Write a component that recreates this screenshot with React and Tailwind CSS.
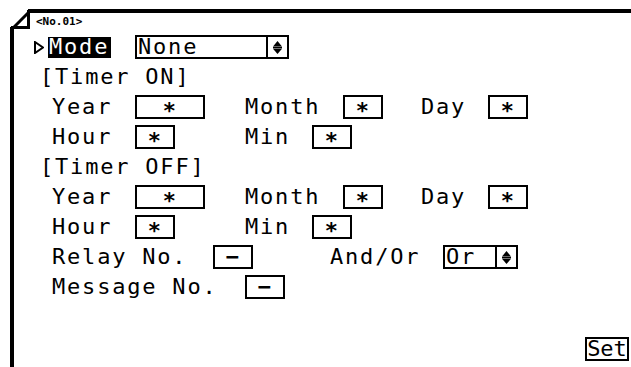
import React from "react";

function Box({ w, children }) {
    return (
        <div className={`h-[24px] border-2 border-black flex items-center justify-center ${w}`}>
            <span className="text-[22px] leading-none font-bold">{children}</span>
        </div>
    );
}

function Arrows() {
    return (
        <svg width="11" height="15" viewBox="0 0 11 15">
            <polygon points="1,6.5 5.5,1 10,6.5" fill="black" />
            <rect x="1" y="6.8" width="9" height="1.6" fill="black" />
            <polygon points="1,8.7 5.5,14 10,8.7" fill="black" />
        </svg>
    );
}

function Select({ w, value }) {
    return (
        <div className={`h-[24px] border-2 border-black flex items-stretch ${w}`}>
            <div className="flex-1 flex items-center pl-[1px] leading-none">{value}</div>
            <div className="w-[21px] border-l-2 border-black flex items-center justify-center">
                <Arrows />
            </div>
        </div>
    );
}

const row = "flex items-center h-[30px] text-[22px] tracking-[1.8px] leading-none";

export default function App() {
    return (
        <div className="w-[631px] h-[367px] bg-white text-black overflow-hidden pl-[10px] pt-[9px] font-['DejaVu_Sans_Mono',monospace]">
            <div className="relative h-full border-l-4 border-t-4 border-black flex flex-col">
                {/* folded corner */}
                <svg className="absolute -left-[4px] -top-[4px]" width="22" height="22" viewBox="0 0 22 22">
                    <rect x="0" y="0" width="22" height="22" fill="white" />
                    <rect x="18" y="0" width="4" height="4" fill="black" />
                    <rect x="0" y="18" width="4" height="4" fill="black" />
                    <line x1="1" y1="21" x2="20" y2="2" stroke="black" strokeWidth="3" />
                    <rect x="17" y="1" width="3" height="19" fill="black" />
                    <rect x="1" y="17" width="19" height="3" fill="black" />
                </svg>

                <div className="h-[19px] pl-[22px] pt-[3px] text-[11px] font-bold leading-none tracking-[0px]">&lt;No.01&gt;</div>

                {/* Mode */}
                <div className={`${row} pl-[20px]`}>
                    <svg width="10" height="13" viewBox="0 0 10 13" className="mr-[4px]">
                        <polygon points="1,1 9,6.5 1,12" fill="none" stroke="black" strokeWidth="2" />
                    </svg>
                    <div className="w-[63px] h-[21px] bg-black text-white flex items-center pl-[1px]">Mode</div>
                    <div className="ml-[24px]">
                        <Select w="w-[154px]" value="None" />
                    </div>
                </div>

                {/* Timer ON */}
                <div className={`${row} pl-[26px]`}>[Timer ON]</div>
                <div className={`${row} pl-[38px]`}>
                    <div className="w-[83px]">Year</div>
                    <Box w="w-[70px]">∗</Box>
                    <div className="ml-[40px] w-[98px]">Month</div>
                    <Box w="w-[40px]">∗</Box>
                    <div className="ml-[38px] w-[67px]">Day</div>
                    <Box w="w-[40px]">∗</Box>
                </div>
                <div className={`${row} pl-[38px]`}>
                    <div className="w-[83px]">Hour</div>
                    <Box w="w-[40px]">∗</Box>
                    <div className="ml-[70px] w-[67px]">Min</div>
                    <Box w="w-[40px]">∗</Box>
                </div>

                {/* Timer OFF */}
                <div className={`${row} pl-[26px]`}>[Timer OFF]</div>
                <div className={`${row} pl-[38px]`}>
                    <div className="w-[83px]">Year</div>
                    <Box w="w-[70px]">∗</Box>
                    <div className="ml-[40px] w-[98px]">Month</div>
                    <Box w="w-[40px]">∗</Box>
                    <div className="ml-[38px] w-[67px]">Day</div>
                    <Box w="w-[40px]">∗</Box>
                </div>
                <div className={`${row} pl-[38px]`}>
                    <div className="w-[83px]">Hour</div>
                    <Box w="w-[40px]">∗</Box>
                    <div className="ml-[70px] w-[67px]">Min</div>
                    <Box w="w-[40px]">∗</Box>
                </div>

                {/* Relay / Message */}
                <div className={`${row} pl-[38px]`}>
                    <div className="w-[161px]">Relay No.</div>
                    <Box w="w-[40px]">−</Box>
                    <div className="ml-[77px] w-[113px]">And/Or</div>
                    <Select w="w-[75px]" value="Or" />
                </div>
                <div className={`${row} pl-[38px]`}>
                    <div className="w-[193px]">Message No.</div>
                    <Box w="w-[40px]">−</Box>
                </div>

                <div className="mt-auto self-end mr-[2px] mb-[6px] h-[24px] w-[44px] border-2 border-black flex items-center justify-center text-[22px] leading-none tracking-[0px]">
                    Set
                </div>
            </div>
        </div>
    );
}
